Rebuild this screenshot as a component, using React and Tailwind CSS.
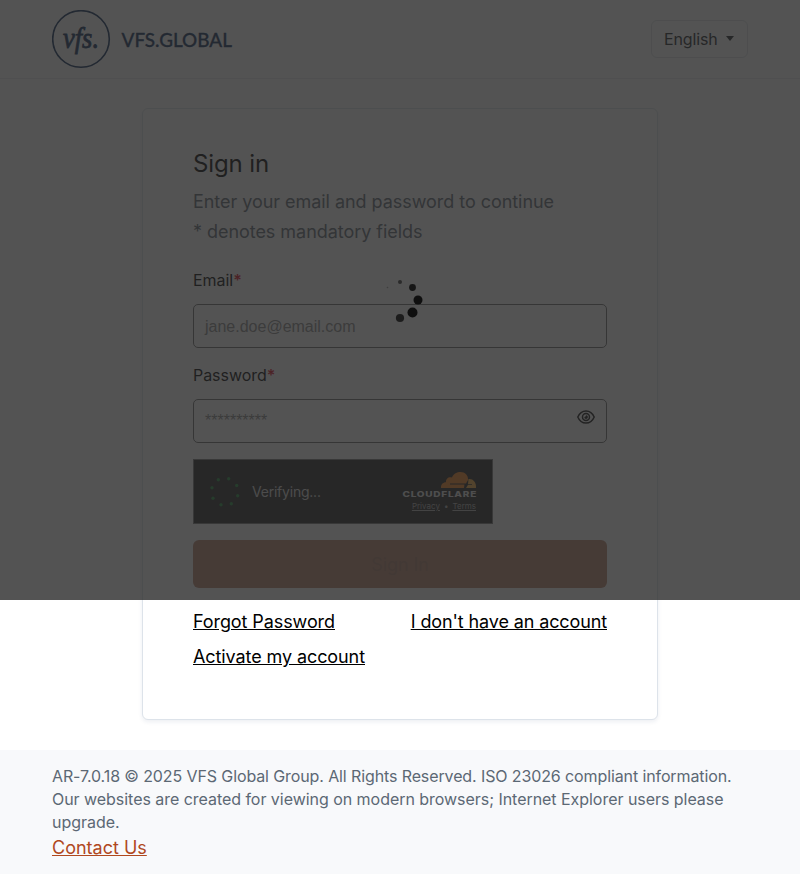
import React from "react";

function Logo() {
  return (
    <svg width="182" height="60" viewBox="0 0 182 60" className="block" fill="#0f2e5a">
      <circle cx="29" cy="29" r="28.3" fill="none" stroke="#0f2e5a" strokeWidth="1.6" />
      <text x="11" y="37.5" textLength="36" lengthAdjust="spacingAndGlyphs" fontFamily="'Liberation Serif', serif" fontStyle="italic" fontSize="29" stroke="#0f2e5a" strokeWidth="0.8">vfs.</text>
      <text x="69.500" y="37" textLength="110.5" lengthAdjust="spacingAndGlyphs" fontFamily="Lato, sans-serif" fontWeight="500" fontSize="19" stroke="#0f2e5a" strokeWidth="0.3">VFS.GLOBAL</text>
    </svg>
  );
}

function EyeIcon() {
  return (
    <svg width="18" height="14" viewBox="0 0 18 14" fill="none" stroke="#111" strokeWidth="1.5">
      <path d="M0.8 7C2.4 3.2 5.4 0.9 9 0.9S15.600 3.200 17.200 7C15.600 10.800 12.600 13.100 9 13.100S2.400 10.800 0.800 7Z" />
      <circle cx="9" cy="7" r="3.500" />
      <path d="M9 5.300C9 6.300 8.300 7 7.300 7A1.800 1.800 0 1 0 9 5.300Z" fill="#111" stroke="none" />
    </svg>
  );
}

const VERIFY_DOTS = [[24.3, 3.8], [34.7, 2.8], [42.7, 9.5], [43.7, 19.8], [37.3, 27.8], [27, 28.8], [19, 22.2], [18, 11.8]];

function Turnstile() {
  return (
    <div className="mt-4 flex h-[65px] w-[300px] justify-between border border-[#797979] bg-[#232323]">
      <div className="flex items-center">
        <svg width="46" height="32" className="mr-3" fill="#1f8a3c">
          {VERIFY_DOTS.map(([x, y]) => (
            <circle key={x} cx={x} cy={y} r="1.7" />
          ))}
        </svg>
        <span className="text-[14px] tracking-[-0.22px] text-[#d9d9d9]">Verifying...</span>
      </div>
      <div className="mr-[15px] flex flex-col items-end pt-3">
        <svg width="75" height="27" viewBox="0 0 75 27" className="block">
          <path d="M39 16C38.500 12.500 41 10.200 44 10.200C43.500 6.500 47 4.200 50 5.500C51.500 1.500 55 0 58.500 0C63 0 66.500 3.500 66 8L64 11.500H48V12.500H62.500L62 16Z" fill="#f38020" />
          <path d="M66.500 7C71 6.500 74.500 10 74 16H64L66 12.700H70V12H66Z" fill="#faae40" />
          <text transform="scale(1.25 1)" x="0.4" y="25" textLength="59" fontFamily="Inter, sans-serif" fontWeight="800" fontSize="8" fill="#e6e6e6">CLOUDFLARE</text>
        </svg>
        <div className="mr-px flex gap-1 text-[8px] leading-[14px] text-[#b0b0b0]">
          <span className="underline">Privacy</span>
          <span>•</span>
          <span className="underline">Terms</span>
        </div>
      </div>
    </div>
  );
}

function Label({ children }) {
  return (
    <div className="text-[16px] leading-6 tracking-[-0.05px] text-black">
      {children}
      <span className="font-semibold text-[#dc1025]">*</span>
    </div>
  );
}

const LOADER_DOTS = [
  { x: 17.500, y: 17.500, r: 0.800, o: 0.300 },
  { x: 30, y: 12, r: 2, o: 0.600 },
  { x: 42.500, y: 17.500, r: 3.400, o: 0.900 },
  { x: 48, y: 30, r: 4.500, o: 1 },
  { x: 42.500, y: 42.500, r: 5, o: 1 },
  { x: 30, y: 48, r: 4.100, o: 0.800 },
];

export default function App() {
  return (
    <div className="relative min-h-[874px] bg-white font-[Inter,sans-serif] tracking-normal">
      <header className="flex h-[79px] items-start justify-between border-b border-[#e9ecef] px-[52px]">
        <div className="pt-[10px]">
          <Logo />
        </div>
        <button className="mt-5 flex h-[38px] w-[97px] items-center rounded-md border border-[#dee2e6] pl-3 text-[16px] tracking-[-0.15px] text-[#212529]">
          English
          <span className="mb-[2px] ml-2 border-x-[4.8px] border-t-[5px] border-x-transparent border-t-[#212529]" />
        </button>
      </header>

      <main className="flex h-[671px] justify-center pt-[29px]">
        <section className="h-[612px] w-[516px] rounded-md border border-[#dde3ea] bg-white px-[50px] pt-[39px] shadow-[0_2px_4px_rgba(30,50,100,0.08)]">
          <h1 className="text-[24px] leading-[32px] tracking-[-0.12px] text-black">Sign in</h1>
          <p className="mt-[7px] text-[18px] leading-[30px] tracking-[-0.045px] text-[#5f6a75]">
            Enter your email and password to continue
            <br />* denotes mandatory fields
          </p>
          <div className="mt-[21px]">
            <Label>Email</Label>
            <div className="mt-3 flex h-11 items-center rounded-[5px] border border-[#6f6f6f] px-[11px] pt-px font-['Liberation_Sans',sans-serif] text-[16px] text-[#8a8a8a]">
              jane.doe@email.com
            </div>
          </div>
          <div className="mt-[15px]">
            <Label>Password</Label>
            <div className="mt-3 flex h-11 items-center justify-between rounded-[5px] border border-[#6f6f6f] px-[11px] font-['Liberation_Sans',sans-serif] text-[16px] text-[#8a8a8a]">
              <span>**********</span>
              <span className="mb-2">
                <EyeIcon />
              </span>
            </div>
          </div>
          <Turnstile />
          <button className="mt-4 block h-12 w-full rounded-[6px] bg-[#be8770] text-[18px] tracking-[-0.1px] text-[#ab7c69]">Sign In</button>
          <nav className="mt-4 flex flex-wrap justify-between text-[18px] leading-[35px] tracking-[-0.09px] text-black underline">
            <a>Forgot Password</a>
            <a className="tracking-[-0.12px]">I don't have an account</a>
            <a>Activate my account</a>
          </nav>
        </section>
      </main>

      <footer className="h-[124px] bg-[#f8f9fb] px-[52px] pt-[15px] text-[16px] leading-[23px] text-[#5c6874]">
        <p className="w-[696px] tracking-[-0.04px]">
          <span className="tracking-[-0.11px]">
            AR-7.0.18 © 2025 VFS Global Group. All Rights Reserved. ISO 23026 compliant information.
          </span>
          <br />
          Our websites are created for viewing on modern browsers; Internet Explorer users please upgrade.
        </p>
        <a className="block text-[18px] leading-[27px] text-[#b0481e] underline">Contact Us</a>
      </footer>

      <div className="absolute inset-x-0 top-0 flex h-[600px] items-center justify-center bg-[rgba(40,40,40,0.8)]">
        <svg width="60" height="60" fill="#0f0f0f">
          {LOADER_DOTS.map((d) => (
            <circle key={`${d.x}-${d.y}`} cx={d.x} cy={d.y} r={d.r} opacity={d.o} />
          ))}
        </svg>
      </div>
    </div>
  );
}
